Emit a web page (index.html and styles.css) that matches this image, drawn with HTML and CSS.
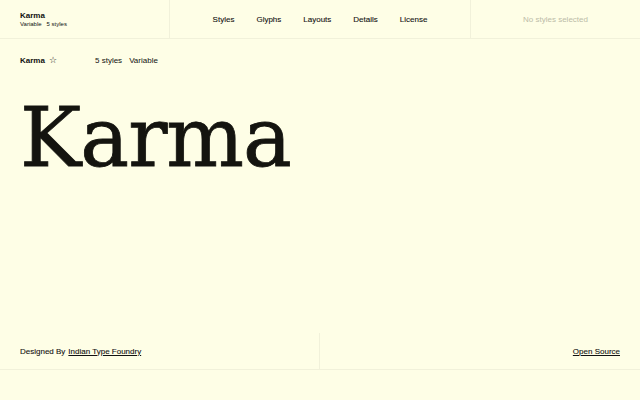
FILE: index.html
```html
<!DOCTYPE html>
<html>
<head>
<meta charset="utf-8">
<link rel="stylesheet" href="styles.css">
</head>
<body>
<div class="page">
  <header class="topbar">
    <div class="brand">
      <div class="brand-name">Karma</div>
      <div class="brand-meta"><span>Variable</span><span>5 styles</span></div>
    </div>
    <nav class="nav">
      <a>Styles</a><a>Glyphs</a><a>Layouts</a><a>Details</a><a>License</a>
    </nav>
    <div class="selection">No styles selected</div>
  </header>
  <div class="info">
    <div class="info-name">Karma <span class="star">&#9734;</span></div>
    <div class="info-meta"><span>5 styles</span><span>Variable</span></div>
  </div>
  <div class="hero">Karma</div>
  <footer class="footer">
    <div class="foot-left">Designed By <a class="link">Indian Type Foundry</a></div>
    <div class="foot-right"><a class="link">Open Source</a></div>
  </footer>
  <div class="tail"></div>
</div>
</body>
</html>
```
FILE: styles.css
```css
html, body { margin: 0; padding: 0; }
body {
  background: #fefee6;
  color: #111110;
  font-family: "Liberation Sans", Arial, sans-serif;
}
.page {
  height: 400px;
  display: flex;
  flex-direction: column;
}
.topbar {
  height: 38px;
  display: flex;
  border-bottom: 1px solid #f1f1da;
}
.brand {
  width: 149px;
  padding-left: 20px;
  border-right: 1px solid #f1f1da;
  display: flex;
  flex-direction: column;
  justify-content: center;
  gap: 1px;
}
.brand-name { font-size: 8px; font-weight: 700; }
.brand-meta { font-size: 6px; display: flex; gap: 5px; }
.nav {
  flex: 1;
  display: flex;
  justify-content: center;
  align-items: center;
  gap: 22px;
  font-size: 8px;
  padding-top: 1px;
  -webkit-text-stroke: 0.1px #111110;
}
.selection {
  width: 169px;
  border-left: 1px solid #f1f1da;
  display: flex;
  align-items: center;
  justify-content: center;
  font-size: 8px;
  padding-top: 1px;
  color: #bcbca8;
}
.info {
  height: 42px;
  display: flex;
  align-items: center;
  padding-left: 20px;
  font-size: 8px;
}
.info-name { width: 75px; font-weight: 700; }
.star { font-weight: 400; font-size: 9px; margin-left: 2px; }
.info-meta { display: flex; gap: 7px; }
.hero {
  font-family: "DejaVu Serif", serif;
  font-size: 82px;
  line-height: 1;
  padding-left: 20px;
  margin-top: 16px;
  color: #14140f;
  -webkit-text-stroke: 0.8px #14140f;
  letter-spacing: -1px;
}
.footer {
  margin-top: auto;
  height: 36px;
  display: flex;
  border-bottom: 1px solid #f1f1da;
  font-size: 8px;
  -webkit-text-stroke: 0.1px #111110;
}
.foot-left {
  width: 299px;
  padding-left: 20px;
  border-right: 1px solid #f1f1da;
  display: flex;
  align-items: center;
  gap: 3px;
}
.foot-right {
  flex: 1;
  display: flex;
  align-items: center;
  justify-content: flex-end;
  padding-right: 20px;
}
.link { text-decoration: underline; }
.tail { height: 30px; }
```
